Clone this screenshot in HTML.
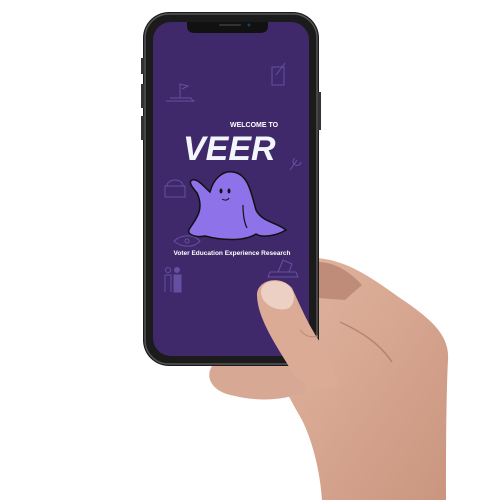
<!DOCTYPE html>
<html><head><style>
body{margin:0;width:500px;height:500px;background:#fff;overflow:hidden;position:relative;font-family:"Liberation Sans",sans-serif}
</style></head><body>
<svg width="500" height="500" viewBox="0 0 500 500" style="position:absolute;left:0;top:0">
<defs>
<linearGradient id="sk" x1="0" y1="0" x2="1" y2="1">
<stop offset="0" stop-color="#e0b4a0"/><stop offset="0.5" stop-color="#d7a690"/><stop offset="1" stop-color="#c9957f"/>
</linearGradient>
</defs>
<!-- palm behind phone -->
<path d="M312 258 C345 258 372 278 400 298 C430 318 450 335 448 360 C446 400 446 450 446 500 L322 500 C320 470 312 440 302 420 C292 402 285 392 280 372 L312 360Z" fill="url(#sk)"/>
<path d="M318 262 C335 262 350 272 362 285 L345 300 L318 298Z" fill="#bf8c79"/>
<!-- lower fingers under phone -->
<path d="M215 362 C203 375 210 392 235 396 C260 402 285 400 305 392 L305 360Z" fill="#d7a893"/>
<!-- phone -->
<rect x="143" y="12" width="176" height="354" rx="26" fill="#1b1b1b"/>
<rect x="145" y="14" width="172" height="350" rx="24" fill="none" stroke="#555" stroke-width="1.5"/>
<rect x="141" y="58" width="3" height="16" fill="#333"/>
<rect x="141" y="84" width="3" height="24" fill="#333"/>
<rect x="141" y="116" width="3" height="24" fill="#333"/>
<rect x="318" y="92" width="3" height="38" fill="#333"/>
<rect x="153" y="22" width="156" height="334" rx="18" fill="#40296a"/>
<path d="M187 22 L268 22 L268 26 C268 31 265 33 260 33 L195 33 C190 33 187 31 187 26Z" fill="#111"/>
<rect x="219" y="24" width="22" height="2" rx="1" fill="#333"/>
<circle cx="249" cy="25" r="1.5" fill="#1a3a6a"/>
<!-- faint icons -->
<g stroke="#6a54a8" stroke-width="1" fill="none" opacity="0.9">
<path d="M166 101 L195 101 M170 98 L191 98 L193 101 M180 98 L180 84 L188 86 L182 89"/>
<rect x="272" y="67" width="12" height="18"/><path d="M276 75 L285 63"/>
<path d="M165 197 L185 197 L185 186 L165 186Z M167 186 C167 178 183 178 183 186"/>
<path d="M290 170 L297 160 M295 158 a4 4 0 1 0 6 4"/>
<path d="M174 241 C182 234 194 234 200 241 C194 248 182 248 174 241Z"/><circle cx="187" cy="241" r="2"/>
<circle cx="168" cy="270" r="2.5"/><path d="M165 275 L171 275 L171 292 M165 275 L165 292"/>
<circle cx="177" cy="270" r="2.5" fill="#6a54a8"/><rect x="174" y="275" width="7" height="17" fill="#6a54a8"/>
<path d="M268 277 L298 277 L296 272 L270 272Z M278 272 L283 260 L292 264 L289 272"/>
</g>
<!-- ghost -->
<path d="M197 193 C192 187 188 182 192 180 C198 178 205 188 210 192 C213 180 222 170 233 172 C248 174 251 192 256 210 C262 222 276 222 286 230 C276 236 262 238 256 234 C243 242 220 240 205 236 C195 238 185 234 190 228 C195 220 205 210 197 193Z" fill="#8d72ea" stroke="#111" stroke-width="1.5"/>
<ellipse cx="221" cy="191" rx="1.5" ry="2.5" fill="#111"/><ellipse cx="229" cy="191" rx="1.5" ry="2.5" fill="#111"/>
<path d="M222 199 C225 201 228 200 229 198" stroke="#111" stroke-width="1" fill="none"/>
<path d="M243 205 C243 215 244 222 247 228" stroke="#111" stroke-width="1.2" fill="none"/>
<!-- thumb (in front) -->
<path d="M257 296 C256 280 280 274 292 288 C300 305 308 325 322 345 C330 358 336 372 338 385 C318 395 298 385 288 365 C274 342 258 318 257 296Z" fill="#dbab96"/>
<path d="M261 292 C261 281 274 279 285 283 C295 288 297 302 289 308 C279 313 261 305 261 292Z" fill="#edd0c4"/>
<path d="M340 322 C362 332 380 344 392 362" stroke="#b88270" stroke-width="1.5" fill="none"/>
<path d="M300 330 C305 336 310 338 318 336" stroke="#c08a77" stroke-width="1" fill="none"/>
</svg>
<div style="position:absolute;left:230px;top:122px;font-size:7px;font-weight:bold;color:#fff">WELCOME TO</div>
<div style="position:absolute;left:183px;top:130px;font-size:34px;font-weight:bold;font-style:italic;color:#f2f6fb">VEER</div>
<div style="position:absolute;left:153px;width:158px;top:250px;text-align:center;font-size:6.5px;font-weight:bold;color:#fff">Voter Education Experience Research</div>
</body></html>
